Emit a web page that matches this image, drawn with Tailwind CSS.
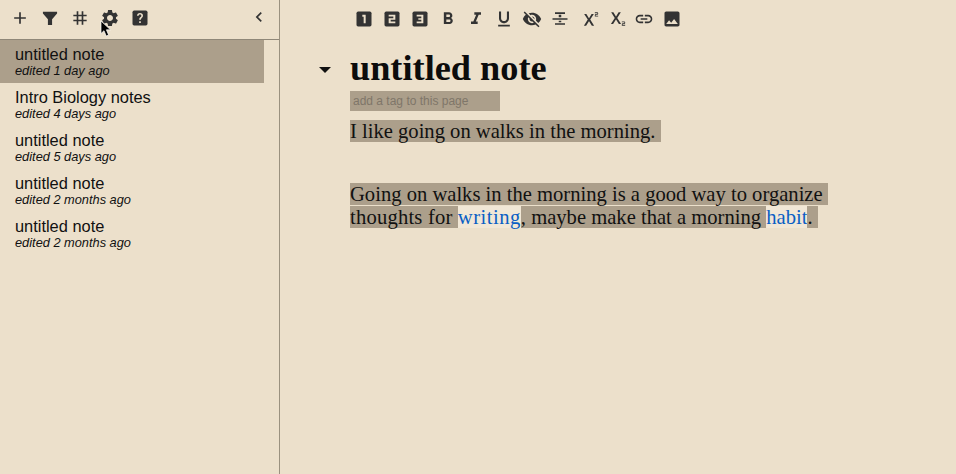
<!DOCTYPE html>
<html>
<head>
<meta charset="utf-8">
<script src="https://cdn.jsdelivr.net/npm/@tailwindcss/browser@4"></script>
</head>
<body class="m-0 bg-[#ece0cb] overflow-hidden">
<div class="relative flex w-[956px] h-[474px] bg-[#ece0cb] text-[#111] overflow-hidden">
  <aside class="w-[280px] h-full border-r border-[#9a917f] flex flex-col shrink-0 font-['Liberation_Sans',sans-serif]">
    <div class="h-10 border-b border-[#8f8778] flex items-center relative shrink-0">
      <div class="flex items-center gap-[10px] pl-[10px] mt-[-3px] text-[#333]">
        <svg class="w-5 h-5" viewBox="0 0 24 24" fill="#333"><path d="M19 13h-6v6h-2v-6H5v-2h6V5h2v6h6v2z"/></svg>
        <svg class="w-5 h-5" viewBox="0 0 24 24" fill="#333"><path d="M3.5 4.5h17v2l-6 7v7h-5v-7l-6-7z"/></svg>
        <svg class="w-5 h-5" viewBox="0 0 24 24" fill="#333"><path d="M20 10V8h-4V4h-2v4h-4V4H8v4H4v2h4v4H4v2h4v4h2v-4h4v4h2v-4h4v-2h-4v-4h4zm-6 4h-4v-4h4v4z"/></svg>
        <svg class="w-5 h-5" viewBox="0 0 24 24" fill="#333"><path d="M19.14 12.94c.04-.3.06-.61.06-.94 0-.32-.02-.64-.07-.94l2.03-1.58c.18-.14.23-.41.12-.61l-1.92-3.32c-.12-.22-.37-.29-.59-.22l-2.39.96c-.5-.38-1.03-.7-1.62-.94l-.36-2.54c-.04-.24-.24-.41-.48-.41h-3.84c-.24 0-.43.17-.47.41l-.36 2.54c-.59.24-1.13.57-1.62.94l-2.39-.96c-.22-.08-.47 0-.59.22L2.74 8.87c-.12.21-.08.47.12.61l2.03 1.58c-.05.3-.09.63-.09.94s.02.64.07.94l-2.03 1.58c-.18.14-.23.41-.12.61l1.92 3.32c.12.22.37.29.59.22l2.39-.96c.5.38 1.03.7 1.62.94l.36 2.54c.05.24.24.41.48.41h3.84c.24 0 .44-.17.47-.41l.36-2.54c.59-.24 1.13-.56 1.62-.94l2.39.96c.22.08.47 0 .59-.22l1.92-3.32c.12-.22.07-.47-.12-.61l-2.01-1.58zM12 15.6c-1.98 0-3.6-1.62-3.6-3.6s1.62-3.6 3.6-3.6 3.6 1.62 3.6 3.6-1.62 3.6-3.6 3.6z"/></svg>
        <svg class="w-5 h-5" viewBox="0 0 24 24"><rect x="3" y="3" width="18" height="18" rx="2" fill="#333"/><path fill="#ece0cb" d="M11 16h2v2h-2zM12 6c-2.2 0-3.6 1.4-3.6 3.4h2c0-1 .6-1.6 1.6-1.6s1.6.6 1.6 1.4c0 1.8-2.6 1.7-2.6 5h2c0-2.3 2.6-2.7 2.6-5C15.6 7.4 14.2 6 12 6z"/></svg>
      </div>
      <svg class="absolute right-[10px] top-[7px] w-5 h-5" viewBox="0 0 24 24" fill="#333"><path d="M15.41 7.41 14 6l-6 6 6 6 1.41-1.41L10.83 12z"/></svg>
    </div>
    <ul class="pr-[15px]">
      <li class="h-[43px] pl-[15px] pt-[4px] bg-[#ac9f8b]"><div class="text-[16.4px] leading-[20px]">untitled note</div><div class="text-[12.8px] leading-[14px] italic">edited 1 day ago</div></li>
      <li class="h-[43px] pl-[15px] pt-[4px]"><div class="text-[16.4px] leading-[20px]">Intro Biology notes</div><div class="text-[12.8px] leading-[14px] italic">edited 4 days ago</div></li>
      <li class="h-[43px] pl-[15px] pt-[4px]"><div class="text-[16.4px] leading-[20px]">untitled note</div><div class="text-[12.8px] leading-[14px] italic">edited 5 days ago</div></li>
      <li class="h-[43px] pl-[15px] pt-[4px]"><div class="text-[16.4px] leading-[20px]">untitled note</div><div class="text-[12.8px] leading-[14px] italic">edited 2 months ago</div></li>
      <li class="h-[43px] pl-[15px] pt-[4px]"><div class="text-[16.4px] leading-[20px]">untitled note</div><div class="text-[12.8px] leading-[14px] italic">edited 2 months ago</div></li>
    </ul>
  </aside>
  <main class="flex-1 font-['Liberation_Serif',serif]">
    <div class="h-10 flex items-center gap-2 pl-[74px] mt-[-1px] text-[#333]">
      <svg class="w-5 h-5" viewBox="0 0 24 24"><rect x="3" y="3" width="18" height="18" rx="2" fill="#333"/><path fill="#ece0cb" d="M10 7h4v10h-2.4V9.2H10z"/></svg>
      <svg class="w-5 h-5" viewBox="0 0 24 24"><rect x="3" y="3" width="18" height="18" rx="2" fill="#333"/><path fill="#ece0cb" d="M8 7h8v6h-5.6v2H16v2H8v-6h5.6V9H8z"/></svg>
      <svg class="w-5 h-5" viewBox="0 0 24 24"><rect x="3" y="3" width="18" height="18" rx="2" fill="#333"/><path fill="#ece0cb" d="M8 7h8v10H8v-2h5.6v-2H10v-2h3.6V9H8z"/></svg>
      <svg class="w-5 h-5" viewBox="0 0 24 24" fill="#333"><path d="M15.6 10.79c.97-.67 1.65-1.77 1.65-2.79 0-2.26-1.75-4-4-4H7v14h7.04c2.09 0 3.71-1.7 3.71-3.79 0-1.52-.86-2.82-2.15-3.42zM10 6.5h3c.83 0 1.5.67 1.5 1.5s-.67 1.5-1.5 1.5h-3v-3zm3.5 9H10v-3h3.5c.83 0 1.5.67 1.5 1.5s-.67 1.5-1.5 1.5z"/></svg>
      <svg class="w-5 h-5" viewBox="0 0 24 24" fill="#333"><path d="M10 4v3h2.21l-3.42 8H6v3h8v-3h-2.21l3.42-8H18V4z"/></svg>
      <svg class="w-5 h-5" viewBox="0 0 24 24" fill="#333"><path d="M12 17c3.31 0 6-2.69 6-6V3h-2.5v8c0 1.93-1.57 3.5-3.5 3.5S8.5 12.93 8.5 11V3H6v8c0 3.31 2.69 6 6 6zm-7 2v2h14v-2H5z"/></svg>
      <svg class="w-5 h-5" viewBox="0 0 24 24" fill="#333"><path d="M12 7c2.76 0 5 2.24 5 5 0 .65-.13 1.26-.36 1.83l2.92 2.92c1.51-1.26 2.7-2.89 3.43-4.75-1.73-4.39-6-7.5-11-7.5-1.4 0-2.74.25-3.98.7l2.16 2.16C10.74 7.13 11.35 7 12 7zM2 4.27l2.28 2.28.46.46C3.08 8.3 1.78 10.02 1 12c1.73 4.39 6 7.5 11 7.5 1.55 0 3.03-.3 4.38-.84l.42.42L19.73 22 21 20.73 3.27 3 2 4.27zM7.53 9.8l1.55 1.55c-.05.21-.08.43-.08.65 0 1.66 1.34 3 3 3 .22 0 .44-.03.65-.08l1.55 1.55c-.67.33-1.41.53-2.2.53-2.76 0-5-2.24-5-5 0-.79.2-1.53.53-2.2zm4.31-.78 3.15 3.15.02-.16c0-1.66-1.34-3-3-3l-.17.01z"/></svg>
      <svg class="w-5 h-5" viewBox="0 0 24 24" fill="#333"><path d="M6 19h12v-2H6v2zM3 11v2h18v-2H3zM6 4v2h12V4H6zm4.5 3v3h3V7h-3zm0 7v2h3v-2h-3z"/></svg>
      <svg class="w-5 h-5 ml-[1px]" viewBox="0 0 24 24" fill="#333"><path d="M22 7h-2v1h3v1h-4V7c0-.55.45-1 1-1h2V5h-3V4h3c.55 0 1 .45 1 1v1c0 .55-.45 1-1 1zM5.88 20h2.66l3.4-5.42h.12l3.4 5.42h2.66l-4.65-7.27L17.81 6h-2.68l-3.07 4.99h-.12L8.85 6H6.19l4.32 6.73L5.88 20z"/></svg>
      <svg class="w-5 h-5 ml-[-1px]" viewBox="0 0 24 24" fill="#333"><path d="M22 18h-2v1h3v1h-4v-2c0-.55.45-1 1-1h2v-1h-3v-1h3c.55 0 1 .45 1 1v1c0 .55-.45 1-1 1zM5.88 18h2.66l3.4-5.42h.12l3.4 5.42h2.66l-4.65-7.27L17.81 4h-2.68l-3.07 4.99h-.12L8.85 4H6.19l4.32 6.73L5.88 18z"/></svg>
      <svg class="w-5 h-5" viewBox="0 0 24 24" fill="#333"><path d="M3.9 12c0-1.71 1.39-3.1 3.1-3.1h4V7H7c-2.76 0-5 2.24-5 5s2.24 5 5 5h4v-1.9H7c-1.71 0-3.1-1.39-3.1-3.1zM8 13h8v-2H8v2zm9-6h-4v1.9h4c1.71 0 3.1 1.39 3.1 3.1s-1.39 3.1-3.1 3.1h-4V17h4c2.76 0 5-2.24 5-5s-2.24-5-5-5z"/></svg>
      <svg class="w-5 h-5" viewBox="0 0 24 24" fill="#333"><path d="M21 19V5c0-1.1-.9-2-2-2H5c-1.1 0-2 .9-2 2v14c0 1.1.9 2 2 2h14c1.1 0 2-.9 2-2zM8.5 13.5l2.5 3.01L14.5 12l4.5 6H5l3.5-4.5z"/></svg>
    </div>
    <div class="relative pl-[70px]">
      <div class="absolute left-[39px] top-[25px] w-0 h-0 border-x-[6px] border-x-transparent border-t-[6px] border-t-[#111]"></div>
      <h1 class="text-[36.3px] leading-[52px] font-bold mt-[3px] text-[#0c0c0c]">untitled note</h1>
      <div class="w-[150px] h-5 bg-[#ac9f8b] mt-[-3px] pl-[3px] text-[12px] leading-5 text-[#7f7669] font-['Liberation_Sans',sans-serif]">add a tag to this page</div>
      <div class="mt-[9px] w-[482px] text-[20.6px] leading-[23px]">
        <p class="mb-[40px]"><span class="bg-[#ac9f8b]">I like going on walks in the morning.&nbsp;</span></p>
        <p><span class="bg-[#ac9f8b]">Going on walks in the morning is a good way to organize&nbsp;</span> <span class="bg-[#ac9f8b] tracking-[0.2px]">thoughts for </span><span class="text-[#0a5fc4] bg-[#f1e7d6] tracking-[0.5px]">writing</span><span class="bg-[#ac9f8b]">, maybe make that a morning </span><span class="text-[#0a5fc4] bg-[#f1e7d6]">habit</span><span class="bg-[#ac9f8b]">.&nbsp;</span></p>
      </div>
    </div>
  </main>
  <svg class="absolute left-[100px] top-[20px] w-[12px] h-[17px]" viewBox="0 0 12 17"><path d="M1 1v12.5l3-2.8 2.2 5.3 2.4-1-2.2-5.2h4.1z" fill="#000" stroke="#fff" stroke-width=".7"/></svg>
</div>
</body>
</html>
